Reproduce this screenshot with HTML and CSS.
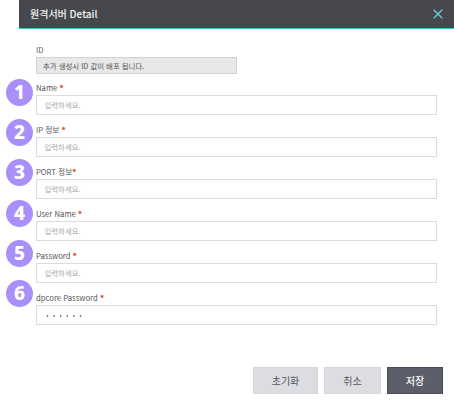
FILE: index.html
```html
<!DOCTYPE html>
<html lang="ko">
<head>
<meta charset="utf-8">
<title>원격서버 Detail</title>
<link rel="stylesheet" href="styles.css">
</head>
<body>
<section class="dialog">
  <header class="header">
    <h1 class="title">원격서버 Detail</h1>
    <svg class="close" viewBox="0 0 10 10"><path d="M0.7 0.7 9.3 9.3M9.3 0.7 0.7 9.3"/></svg>
  </header>
  <form class="form">
    <div class="field field-id"><label class="label">ID</label><div class="input readonly">추가 생성시 ID 값이 배포 됩니다.</div></div>
    <div class="field"><label class="label">Name <b class="req">*</b></label><div class="input">입력하세요.</div></div>
    <div class="field"><label class="label">IP 정보 <b class="req">*</b></label><div class="input">입력하세요.</div></div>
    <div class="field"><label class="label">PORT 정보<b class="req">*</b></label><div class="input">입력하세요.</div></div>
    <div class="field"><label class="label">User Name <b class="req">*</b></label><div class="input">입력하세요.</div></div>
    <div class="field"><label class="label">Password <b class="req">*</b></label><div class="input">입력하세요.</div></div>
    <div class="field"><label class="label">dpcore Password <b class="req">*</b></label><div class="input password"><svg class="dots" viewBox="0 0 36 4"><path d="M1.5 2h0M8.1 2h0M14.7 2h0M21.3 2h0M27.9 2h0M34.5 2h0"/></svg></div></div>
  </form>
  <footer class="actions">
    <button class="btn reset">초기화</button>
    <button class="btn">취소</button>
    <button class="btn primary">저장</button>
  </footer>
</section>
<div class="badges">
  <span class="badge">1</span><span class="badge">2</span><span class="badge">3</span><span class="badge">4</span><span class="badge">5</span><span class="badge">6</span>
</div>
</body>
</html>
```
FILE: styles.css
```css
* { box-sizing: border-box; }
body {
  margin: 0;
  height: 403px;
  overflow: hidden;
  position: relative;
  background: #fff;
  font-family: "Noto Sans CJK KR", sans-serif;
}
.dialog { margin-left: 19px; }
.header {
  display: flex;
  align-items: center;
  justify-content: space-between;
  height: 29px;
  padding: 0 11px;
  background: #47484d;
  border-bottom: 1px solid #4cb9c9;
}
.title { margin: 0; font-size: 10px; line-height: 28px; font-weight: 500; color: #f4f4f5; }
.close { width: 10px; height: 10px; }
.close path { fill: none; stroke: #6ecbd8; stroke-width: 1.3; }
.form { padding: 14px 17px 0; }
.field { height: 42px; }
.field-id { height: 38px; }
.label {
  display: block;
  height: 14px;
  font-size: 7.7px;
  line-height: 14px;
  color: #55565a;
  white-space: pre;
}
.req { color: #e0481c; font-weight: 900; }
.input {
  display: flex;
  align-items: center;
  width: 401px;
  height: 20px;
  padding-left: 7.5px;
  border: 1px solid #dcdcdc;
  background: #fff;
  font-size: 7.4px;
  line-height: 18px;
  color: #a8a8a8;
}
.readonly {
  width: 201px;
  height: 17px;
  padding-left: 6px;
  border-color: #d2d2d2;
  background: #e8e8e8;
  line-height: 15px;
  color: #555;
}
.password { padding-left: 9px; }
.dots { width: 36px; height: 4px; margin-top: 1px; }
.dots path { stroke: #333; stroke-width: 1.6; stroke-linecap: round; }
.actions { display: flex; gap: 6px; padding: 34px 0 0 234px; }
.btn {
  width: 65px;
  height: 27px;
  padding: 0;
  border: 1px solid #d5d7dc;
  background: #dcdde2;
  font-family: inherit;
  font-size: 10px;
  color: #55565c;
}
.btn:not(.reset) { width: 57px; }
.btn.primary { width: 56px; background: #5b5f69; border-color: #464c58; color: #fff; font-weight: 500; }
.badges {
  position: absolute;
  left: 6px;
  top: 79px;
  display: flex;
  flex-direction: column;
  gap: 13.2px;
}
.badge {
  width: 27px;
  height: 27px;
  border-radius: 50%;
  background: #a990f8;
  color: #fff;
  font-family: "Noto Sans", sans-serif;
  font-size: 19px;
  font-weight: 800;
  line-height: 27px;
  text-align: center;
}
```
